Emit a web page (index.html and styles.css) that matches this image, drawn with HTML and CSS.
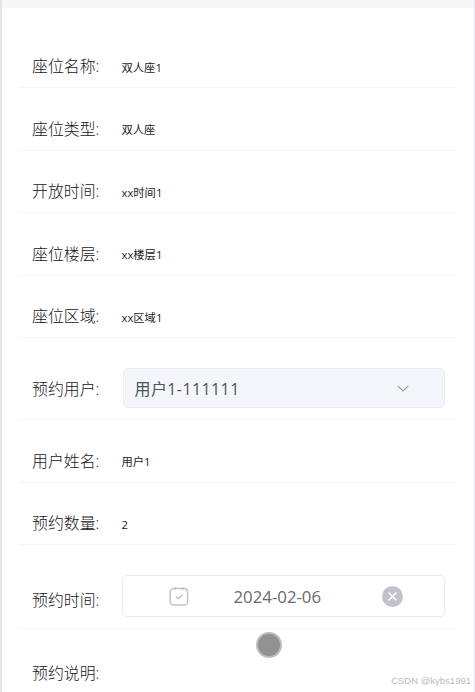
FILE: index.html
```
<!DOCTYPE html>
<html lang="zh-CN">
<head>
  <meta charset="UTF-8" />
  <meta name="viewport" content="width=device-width, initial-scale=1.0" />
  <title>座位预约</title>
  <link rel="stylesheet" href="styles.css">
</head>
<body>
  <div class="page">
    <div class="top-strip"></div>
    <form class="form">
      <div class="row"><label class="label">座位名称:</label><span class="value">双人座1</span></div>
      <div class="row"><label class="label">座位类型:</label><span class="value">双人座</span></div>
      <div class="row"><label class="label">开放时间:</label><span class="value">xx时间1</span></div>
      <div class="row"><label class="label">座位楼层:</label><span class="value">xx楼层1</span></div>
      <div class="row"><label class="label">座位区域:</label><span class="value">xx区域1</span></div>
      <div class="row row-select">
        <label class="label">预约用户:</label>
        <div class="select">
          <span class="select-text">用户1-111111</span>
          <svg class="arrow" width="14" height="14" viewBox="0 0 14 14"><path d="M1.8 4.9 7 9.9l5.2-5" /></svg>
        </div>
      </div>
      <div class="row"><label class="label">用户姓名:</label><span class="value">用户1</span></div>
      <div class="row"><label class="label">预约数量:</label><span class="value">2</span></div>
      <div class="row row-date">
        <label class="label">预约时间:</label>
        <div class="date">
          <svg class="calendar" width="20" height="20" viewBox="0 0 20 20">
            <rect x="1.2" y="2.4" width="17.4" height="16.6" rx="3.5" />
            <path d="M6.2 1v3M13.6 1v3M6.7 10.4l2.5 2.3 4.2-3.8" />
          </svg>
          <span class="date-text">2024-02-06</span>
          <svg class="clear" width="21" height="21" viewBox="0 0 21 21">
            <circle cx="10.5" cy="10.5" r="10.5" />
            <path d="M6.5 6.5l8 8M14.5 6.5l-8 8" />
          </svg>
        </div>
      </div>
      <div class="row row-last"><label class="label">预约说明:</label></div>
    </form>
    <!-- touch pointer -->
    <div class="pointer"></div>
    <div class="watermark">CSDN @kybs1991</div>
  </div>
</body>
</html>
```
FILE: styles.css
```
* {
  box-sizing: border-box;
}
body {
  margin: 0;
  background: #fff;
  font-family: 'Open Sans', 'Noto Sans CJK SC', sans-serif;
}
.page {
  position: relative;
  height: 692px;
  overflow: hidden;
  border-left: 2px solid #e4e4ed;
  border-right: 1px solid #e6e6f0;
}
.top-strip {
  height: 8px;
  background: #f7f7f7;
}
.form {
  padding: 17.5px 18px 0 18px;
}
.row {
  display: flex;
  align-items: center;
  height: 62.5px;
  padding: 30px 11px 11px 12px;
  border-bottom: 1px solid #f4f4f5;
}
.label {
  flex: none;
  width: 89.5px;
  padding-top: 1px;
  font-size: 15.9px;
  font-weight: 300;
  line-height: 20px;
  color: #15161a;
  white-space: nowrap;
}
.value {
  padding-top: 4px;
  font-size: 11.3px;
  line-height: 18px;
  color: #1c1c1c;
}
.row-select {
  height: 82px;
}
.select {
  display: flex;
  align-items: center;
  justify-content: space-between;
  flex: 1;
  height: 40px;
  margin-left: 1px;
  padding: 0 34px 0 11px;
  background: #f5f6fb;
  border: 1px solid #ebecef;
  border-radius: 5px;
}
.select-text {
  font-size: 16px;
  letter-spacing: 0.4px;
  color: #505259;
}
.arrow {
  fill: none;
  stroke: #9b9ea5;
  stroke-width: 1.3;
}
.row-date {
  height: 84px;
}
.row-date .label {
  padding-top: 8px;
}
.date {
  display: flex;
  align-items: center;
  flex: 1;
  height: 42px;
  padding: 0 41px 0 46px;
  border: 1px solid #ebebed;
  border-radius: 5px;
}
.date-text {
  flex: 1;
  padding: 1px 0 0 45px;
  font-size: 16.8px;
  color: #68696d;
}
.calendar {
  fill: none;
  stroke: #c1c4cd;
  stroke-width: 1.5;
}
.clear circle {
  fill: #c0c3ce;
}
.clear path {
  fill: none;
  stroke: #fff;
  stroke-width: 1.5;
}
.row-last {
  height: 68px;
  padding-top: 30px;
  border-bottom: none;
}
.pointer {
  position: absolute;
  left: 254px;
  top: 632px;
  width: 26px;
  height: 26px;
  background: #929294;
  border: 2px solid #bcbcbc;
  border-radius: 50%;
}
.watermark {
  position: absolute;
  right: 3px;
  bottom: 4px;
  font-family: 'Liberation Sans', sans-serif;
  font-size: 9.5px;
  line-height: 14px;
  color: #bbb;
}
```
